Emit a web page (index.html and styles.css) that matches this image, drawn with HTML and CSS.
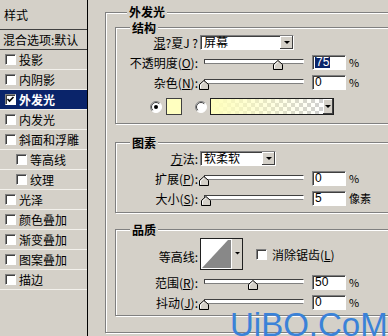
FILE: index.html
```html
<!DOCTYPE html>
<html lang="zh-CN">
<head>
  <meta charset="UTF-8" />
  <title>图层样式 - 外发光</title>
  <link rel="stylesheet" href="styles.css">
</head>
<body>
  <div class="dialog">
    <ul class="styles-list">
      <li class="head">样式</li>
      <li class="blend">混合选项:默认</li>
      <li><span class="check"></span>投影</li>
      <li><span class="check"></span>内阴影</li>
      <li class="selected"><span class="check"><svg width="9" height="9" viewBox="0 0 9 9"><path d="M1.5 4 L3.5 6 L7.5 2" fill="none" stroke="#000" stroke-width="1.6"/></svg></span>外发光</li>
      <li><span class="check"></span>内发光</li>
      <li><span class="check"></span>斜面和浮雕</li>
      <li class="sub"><span class="check"></span>等高线</li>
      <li class="sub"><span class="check"></span>纹理</li>
      <li><span class="check"></span>光泽</li>
      <li><span class="check"></span>颜色叠加</li>
      <li><span class="check"></span>渐变叠加</li>
      <li><span class="check"></span>图案叠加</li>
      <li><span class="check"></span>描边</li>
    </ul>

    <div class="panel">
      <div class="group outer">
        <span class="legend">外发光</span>

        <div class="group structure">
          <span class="legend">结构</span>
          <div class="rows">
            <div class="row">
              <span class="label"><u>混</u>?夏J ?</span>
              <div class="select blend-mode"><span class="value">屏幕</span><span class="drop-btn"><i class="arrow"></i></span></div>
            </div>
            <div class="row">
              <span class="label">不透明度(<u>O</u>):</span>
              <div class="slider">
                <div class="track"></div>
                <svg class="thumb" style="left: 73px" width="10" height="10" viewBox="0 0 10 10"><polygon points="0.5,9.5 0.5,4.5 5,0.5 9.5,4.5 9.5,9.5" fill="#d4d0c8" stroke="#000"/><polyline points="1.5,8.5 1.5,5 5,1.8" fill="none" stroke="#fff"/></svg>
              </div>
              <div class="field"><span class="picked">75</span></div>
              <span class="unit">%</span>
            </div>
            <div class="row">
              <span class="label">杂色(<u>N</u>):</span>
              <div class="slider">
                <div class="track"></div>
                <svg class="thumb" style="left: -1px" width="10" height="10" viewBox="0 0 10 10"><polygon points="0.5,9.5 0.5,4.5 5,0.5 9.5,4.5 9.5,9.5" fill="#d4d0c8" stroke="#000"/><polyline points="1.5,8.5 1.5,5 5,1.8" fill="none" stroke="#fff"/></svg>
              </div>
              <div class="field">0</div>
              <span class="unit">%</span>
            </div>
            <div class="row colors">
              <svg class="radio" width="12" height="12" viewBox="0 0 12 12"><circle cx="6" cy="6" r="5.5" fill="#fff"/><path d="M2.1 9.9 A5.5 5.5 0 0 1 9.9 2.1" fill="none" stroke="#808080"/><path d="M9.9 2.1 A5.5 5.5 0 0 1 2.1 9.9" fill="none" stroke="#fff"/><path d="M2.8 9.2 A4.5 4.5 0 0 1 9.2 2.8" fill="none" stroke="#404040"/><circle cx="6" cy="6" r="2" fill="#000"/></svg>
              <span class="swatch"></span>
              <svg class="radio off" width="12" height="12" viewBox="0 0 12 12"><circle cx="6" cy="6" r="5.5" fill="#fff"/><path d="M2.1 9.9 A5.5 5.5 0 0 1 9.9 2.1" fill="none" stroke="#808080"/><path d="M9.9 2.1 A5.5 5.5 0 0 1 2.1 9.9" fill="none" stroke="#fff"/><path d="M2.8 9.2 A4.5 4.5 0 0 1 9.2 2.8" fill="none" stroke="#404040"/></svg>
              <div class="gradient"><span class="ramp"></span><span class="drop-btn"><i class="arrow"></i></span></div>
            </div>
          </div>
        </div>

        <div class="group elements">
          <span class="legend">图素</span>
          <div class="rows">
            <div class="row">
              <span class="label"><u>方</u>法:</span>
              <div class="select method"><span class="value">软柔软</span><span class="drop-btn"><i class="arrow"></i></span></div>
            </div>
            <div class="row">
              <span class="label">扩展(<u>P</u>):</span>
              <div class="slider">
                <div class="track"></div>
                <svg class="thumb" style="left: -1px" width="10" height="10" viewBox="0 0 10 10"><polygon points="0.5,9.5 0.5,4.5 5,0.5 9.5,4.5 9.5,9.5" fill="#d4d0c8" stroke="#000"/><polyline points="1.5,8.5 1.5,5 5,1.8" fill="none" stroke="#fff"/></svg>
              </div>
              <div class="field">0</div>
              <span class="unit">%</span>
            </div>
            <div class="row">
              <span class="label">大小(<u>S</u>):</span>
              <div class="slider">
                <div class="track"></div>
                <svg class="thumb" style="left: 1px" width="10" height="10" viewBox="0 0 10 10"><polygon points="0.5,9.5 0.5,4.5 5,0.5 9.5,4.5 9.5,9.5" fill="#d4d0c8" stroke="#000"/><polyline points="1.5,8.5 1.5,5 5,1.8" fill="none" stroke="#fff"/></svg>
              </div>
              <div class="field">5</div>
              <span class="unit">像素</span>
            </div>
          </div>
        </div>

        <div class="group quality">
          <span class="legend">品质</span>
          <div class="rows">
            <div class="row contour-row">
              <span class="label">等高线:</span>
              <svg class="contour" width="43" height="32" viewBox="0 0 43 32">
                <rect x="0.5" y="0.5" width="42" height="31" fill="#fff" stroke="#202020"/>
                <polygon points="2,30 28,2 31,2 31,30" fill="#888"/>
                <line x1="31.5" y1="1" x2="31.5" y2="31" stroke="#fff"/>
                <rect x="32" y="1" width="10" height="30" fill="#d4d0c8"/>
                <polygon points="35,14 40,14 37.5,16.5" fill="#000"/>
              </svg>
              <span class="check"></span>
              <span class="check-text">消除锯齿(<u>L</u>)</span>
            </div>
            <div class="row">
              <span class="label">范围(<u>R</u>):</span>
              <div class="slider">
                <div class="track"></div>
                <svg class="thumb" style="left: 48px" width="10" height="10" viewBox="0 0 10 10"><polygon points="0.5,9.5 0.5,4.5 5,0.5 9.5,4.5 9.5,9.5" fill="#d4d0c8" stroke="#000"/><polyline points="1.5,8.5 1.5,5 5,1.8" fill="none" stroke="#fff"/></svg>
              </div>
              <div class="field">50</div>
              <span class="unit">%</span>
            </div>
            <div class="row">
              <span class="label">抖动(<u>J</u>):</span>
              <div class="slider">
                <div class="track"></div>
                <svg class="thumb" style="left: -1px" width="10" height="10" viewBox="0 0 10 10"><polygon points="0.5,9.5 0.5,4.5 5,0.5 9.5,4.5 9.5,9.5" fill="#d4d0c8" stroke="#000"/><polyline points="1.5,8.5 1.5,5 5,1.8" fill="none" stroke="#fff"/></svg>
              </div>
              <div class="field">0</div>
              <span class="unit">%</span>
            </div>
          </div>
        </div>
      </div>
    </div>
  </div>

  <div class="watermark">UiBQ.CoM</div>
</body>
</html>
```

FILE: styles.css
```css
* {
  box-sizing: border-box;
}

body {
  margin: 0;
  width: 388px;
  height: 336px;
  overflow: hidden;
  position: relative;
  background: #d4d0c8;
  font-family: "Noto Sans CJK SC", "Liberation Sans", sans-serif;
  font-size: 12px;
  color: #000;
}

.dialog {
  display: flex;
  height: 100%;
}

/* left list of effects */
.styles-list {
  list-style: none;
  margin: 0;
  padding: 0;
  width: 88px;
  flex: none;
  height: 100%;
  border-right: 1px solid #000;
}

.styles-list li {
  display: flex;
  align-items: center;
  gap: 3px;
  height: 20px;
  padding-left: 5px;
  border-bottom: 1px solid #f3f1ec;
  white-space: nowrap;
  line-height: 14px;
}

.styles-list .head {
  height: 30px;
  padding-left: 4px;
  border-bottom-color: #404040;
}

.styles-list .blend {
  padding-left: 3px;
  border-bottom-color: #404040;
}

.styles-list .sub {
  padding-left: 16px;
}

.styles-list .selected {
  background: #0a246a;
  color: #fff;
  font-weight: bold;
}

.check {
  display: inline-flex;
  align-items: center;
  justify-content: center;
  flex: none;
  width: 11px;
  height: 11px;
  background: #fff;
  border: 1px solid;
  border-color: #808080 #fff #fff #808080;
  box-shadow: inset 1px 1px 0 #404040;
}

.check svg {
  display: block;
}

/* right side */
.panel {
  flex: 1;
  padding: 12px 0 0 17px;
}

.group {
  border: 1px solid #808080;
  box-shadow: inset 1px 1px 0 #fff, 1px 1px 0 #fff;
}

.legend {
  display: block;
  width: fit-content;
  height: 13px;
  line-height: 13px;
  margin: -7px 0 0 14px;
  padding: 0 2px;
  background: #d4d0c8;
  font-weight: bold;
}

.outer {
  width: 330px;
  height: 321px;
  padding-left: 9px;
}

.outer > .legend {
  margin: -8px 0 0 12px;
}

.structure {
  margin-top: 9px;
  width: 300px;
  height: 97px;
}

.elements {
  margin-top: 18px;
  width: 300px;
  height: 71px;
}

.quality {
  margin-top: 16px;
  width: 300px;
  height: 87px;
}

.rows {
  display: flex;
  flex-direction: column;
  gap: 5px;
  padding-top: 1px;
}

.elements .rows,
.quality .rows {
  padding-top: 2px;
}

.row {
  display: flex;
  align-items: center;
  height: 15px;
}

.label {
  width: 82px;
  flex: none;
  text-align: right;
  line-height: 15px;
  margin-right: 2px;
  white-space: nowrap;
}

/* dropdowns */
.select {
  display: flex;
  height: 15px;
  background: #fff;
  border: 1px solid;
  border-color: #808080 #fff #fff #808080;
  box-shadow: inset 1px 1px 0 #404040;
}

.blend-mode {
  width: 94px;
}

.method {
  width: 76px;
}

.select .value {
  flex: 1;
  padding-left: 3px;
  line-height: 12px;
}

.drop-btn {
  display: flex;
  align-items: center;
  justify-content: center;
  width: 13px;
  flex: none;
  background: #d4d0c8;
  box-shadow: inset -1px -1px 0 #404040, inset 1px 1px 0 #fff;
}

.arrow {
  width: 0;
  height: 0;
  border-left: 3px solid transparent;
  border-right: 3px solid transparent;
  border-top: 3px solid #000;
}

/* sliders */
.slider {
  position: relative;
  width: 104px;
  height: 15px;
  flex: none;
}

.track {
  margin: 4px 0 0 4px;
  width: 100px;
  height: 5px;
  background: #fff;
  border: 1px solid;
  border-color: #404040 #fff #808080 #404040;
}

.thumb {
  position: absolute;
  top: 5px;
  display: block;
}

.field {
  width: 34px;
  height: 15px;
  margin-left: 8px;
  padding-left: 2px;
  flex: none;
  background: #fff;
  border: 1px solid;
  border-color: #808080 #fff #fff #808080;
  box-shadow: inset 1px 1px 0 #404040;
  font-family: "Liberation Sans", sans-serif;
  font-size: 12px;
  line-height: 13px;
}

.picked {
  display: inline-block;
  background: #0a246a;
  color: #fff;
  padding: 0 1px;
  line-height: 11px;
}

.unit {
  margin-left: 3px;
  font-size: 11px;
  line-height: 13px;
}

/* colour row */
.colors {
  height: 17px;
  margin-top: 3px;
  padding-left: 34px;
}

.radio {
  display: block;
  flex: none;
}

.swatch {
  width: 16px;
  height: 17px;
  margin-left: 4px;
  background: #ffffc0;
  border: 1px solid #404040;
}

.radio.off {
  margin-left: 13px;
}

.gradient {
  display: flex;
  width: 124px;
  height: 17px;
  margin-left: 3px;
  border: 1px solid #202020;
}

.gradient .ramp {
  flex: 1;
  background: linear-gradient(to right, #ffffbc 0%, rgba(255, 255, 188, 0) 100%),
    repeating-conic-gradient(#cfcfcf 0 25%, #fff 0 50%) 0 0 / 8px 8px;
}

.gradient .drop-btn {
  width: 10px;
}

/* quality */
.contour-row {
  height: 32px;
}

.contour-row .label {
  padding-top: 5px;
}

.contour {
  display: block;
  flex: none;
}

.contour-row .check {
  margin-left: 13px;
}

.check-text {
  margin-left: 5px;
}

.watermark {
  position: absolute;
  left: 230px;
  top: 313px;
  font-family: "Liberation Sans", sans-serif;
  font-size: 33px;
  line-height: 24px;
  color: #3a82d8;
  white-space: nowrap;
}
```
